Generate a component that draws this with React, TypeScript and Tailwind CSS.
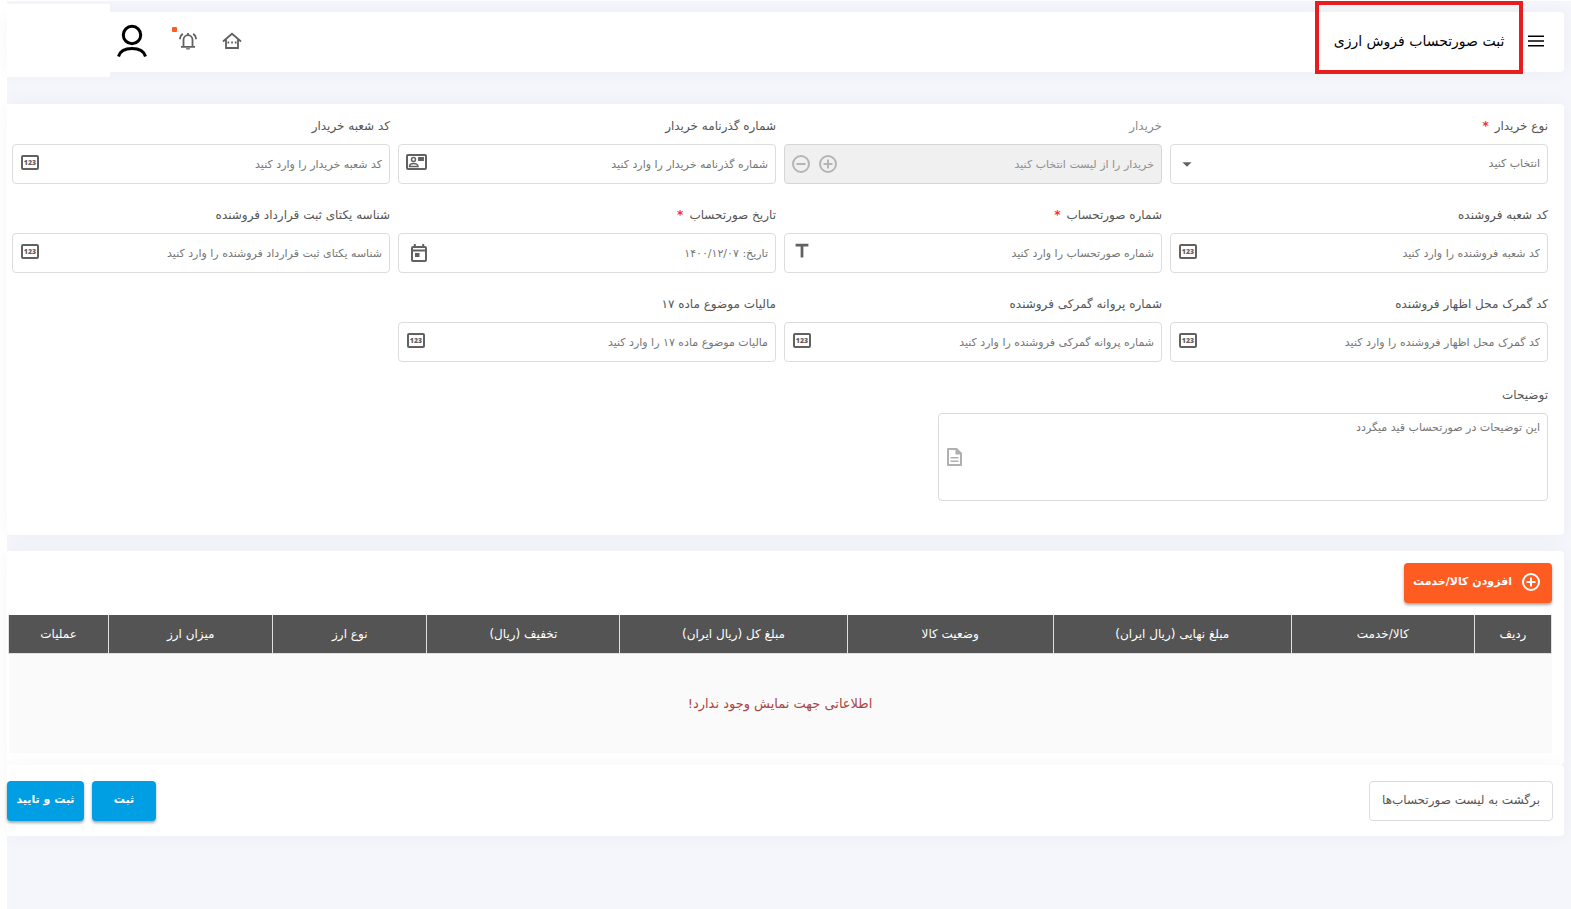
import type { ReactNode } from 'react';
import { MdArrowDropDown, MdTitle } from 'react-icons/md';

type IconName = 'number' | 'contact' | 'date' | 'text' | 'select' | 'picker';

interface Field {
  id: string;
  label: string;
  placeholder: string;
  icon: IconName;
  required?: boolean;
  disabled?: boolean;
}

const fields: Field[] = [
  { id: 'buyerType', label: 'نوع خریدار', placeholder: 'انتخاب کنید', icon: 'select', required: true },
  { id: 'buyer', label: 'خریدار', placeholder: 'خریدار را از لیست انتخاب کنید', icon: 'picker', disabled: true },
  { id: 'passport', label: 'شماره گذرنامه خریدار', placeholder: 'شماره گذرنامه خریدار را وارد کنید', icon: 'contact' },
  { id: 'buyerBranch', label: 'کد شعبه خریدار', placeholder: 'کد شعبه خریدار را وارد کنید', icon: 'number' },
  { id: 'sellerBranch', label: 'کد شعبه فروشنده', placeholder: 'کد شعبه فروشنده را وارد کنید', icon: 'number' },
  { id: 'invoiceNumber', label: 'شماره صورتحساب', placeholder: 'شماره صورتحساب را وارد کنید', icon: 'text', required: true },
  { id: 'invoiceDate', label: 'تاریخ صورتحساب', placeholder: 'تاریخ: ۱۴۰۰/۱۲/۰۷', icon: 'date', required: true },
  { id: 'contractId', label: 'شناسه یکتای ثبت قرارداد فروشنده', placeholder: 'شناسه یکتای ثبت قرارداد فروشنده را وارد کنید', icon: 'number' },
  { id: 'customsCode', label: 'کد گمرک محل اظهار فروشنده', placeholder: 'کد گمرک محل اظهار فروشنده را وارد کنید', icon: 'number' },
  { id: 'customsLicense', label: 'شماره پروانه گمرکی فروشنده', placeholder: 'شماره پروانه گمرکی فروشنده را وارد کنید', icon: 'number' },
  { id: 'taxArticle', label: 'مالیات موضوع ماده ۱۷', placeholder: 'مالیات موضوع ماده ۱۷ را وارد کنید', icon: 'number' },
];

const columns = [
  { title: 'ردیف', width: 'w-[77px]' },
  { title: 'کالا/خدمت', width: 'w-[183px]' },
  { title: 'مبلغ نهایی (ریال ایران)', width: 'w-[238px]' },
  { title: 'وضعیت کالا', width: 'w-[206px]' },
  { title: 'مبلغ کل (ریال ایران)', width: 'w-[227px]' },
  { title: 'تخفیف (ریال)', width: 'w-[193px]' },
  { title: 'نوع ارز', width: 'w-[154px]' },
  { title: 'میزان ارز', width: 'w-[164px]' },
  { title: 'عملیات', width: 'w-[100px]' },
];

const controlClass =
  'h-10 w-full rounded border border-[#dcdcdc] bg-white pr-[7px] pl-10 text-[11px] text-[#757575] placeholder:text-[#757575] outline-none disabled:border-[#d6d6d6] disabled:bg-[#f0f0f0] disabled:placeholder:text-[#8f8f8f]';

function NumberIcon() {
  return (
    <svg width="18" height="15" viewBox="0 0 18 15" className="text-[#616161]">
      <rect x="1" y="1" width="16" height="13" rx="1" fill="none" stroke="currentColor" strokeWidth="2" />
      <text
        x="9"
        y="10"
        textAnchor="middle"
        fontSize="7"
        fontWeight="800"
        fill="currentColor"
        direction="ltr"
        fontFamily="Open Sans, sans-serif"
      >
        123
      </text>
    </svg>
  );
}

function ContactIcon() {
  return (
    <svg width="21" height="16" viewBox="0 0 21 16" fill="none" stroke="currentColor">
      <rect x="1" y="1" width="19" height="14" rx="1" strokeWidth="2" />
      <circle cx="7.500" cy="5.500" r="2" strokeWidth="1.500" />
      <path d="M3.500 12.500c0-2 2-3 4-3s4.500 1 4.500 3z" strokeWidth="1.500" />
      <path d="M12.700 3.700h4.600v2.600h-4.600zM12.700 5h4.600" strokeWidth="1.300" />
    </svg>
  );
}

function CalendarIcon() {
  return (
    <svg width="16" height="18" viewBox="0 0 16 18" fill="none" stroke="currentColor" strokeWidth="2">
      <rect x="1" y="3" width="14" height="14" rx="1" />
      <path d="M1 6.500h14" />
      <path d="M3.800 0v3M12.200 0v3" />
      <path d="M4 9h4.500v4H4z" fill="currentColor" stroke="none" />
    </svg>
  );
}

function DocumentIcon() {
  return (
    <svg
      width="15"
      height="18"
      viewBox="0 0 15 18"
      fill="none"
      stroke="currentColor"
      className="absolute top-[35px] left-[9px] text-[#b0b0b0]"
    >
      <path d="M1 1h8.500L14 5.500V17H1z" strokeWidth="2" strokeLinejoin="round" />
      <path d="M8.500 1v5.500H14L9 1z" fill="currentColor" stroke="none" />
      <path d="M3.500 9.700h8M3.500 13.300h8" strokeWidth="1.600" />
    </svg>
  );
}

function CircleIcon({ plus = false }: { plus?: boolean }) {
  return (
    <svg width="18" height="18" viewBox="0 0 18 18" fill="none" stroke="currentColor" strokeWidth="2">
      <circle cx="9" cy="9" r="8" />
      <path d={plus ? 'M4.500 9h9M9 4.500v9' : 'M4.500 9h9'} />
    </svg>
  );
}

function MenuIcon() {
  return (
    <svg width="16" height="12" viewBox="0 0 16 12" stroke="currentColor" strokeWidth="1.600">
      <path d="M0 1.300h16M0 6h16M0 10.700h16" />
    </svg>
  );
}

function HomeIcon() {
  return (
    <svg width="20" height="18" viewBox="0 0 20 18" fill="none" stroke="currentColor" strokeWidth="1.800">
      <path d="M1 9.500 10 1.800l9 7.700M4 7.500V16h12V7.500" />
      <path d="M5.500 10.500h1.700M9.200 10.500h1.700M12.800 10.500h1.700" />
    </svg>
  );
}

function BellIcon() {
  return (
    <svg width="20" height="20" viewBox="0 0 20 20" fill="none" stroke="currentColor" strokeWidth="1.800">
      <path d="M5.500 15.500V9a4.500 4.800 0 0 1 9 0v6.500M3 15.800h14M10 4.200V2" />
      <path d="M2 8.200C2.100 5.700 3 4 4.800 2.700M18 8.200c-.1-2.500-1-4.200-2.800-5.500" />
      <path d="M8.400 17.400h3.200v.8H8.400z" fill="currentColor" strokeWidth="0.500" />
    </svg>
  );
}

function UserIcon() {
  return (
    <svg width="32" height="34" viewBox="0 0 32 34" fill="none" stroke="currentColor" strokeWidth="3">
      <circle cx="16" cy="11" r="8.700" />
      <path d="M2.500 32.500C4 27 9.500 24.500 16 24.500s12 2.500 13.500 8" />
    </svg>
  );
}

const fieldIcons: Record<IconName, { place: string; node: ReactNode }> = {
  number: { place: 'left-[9px] pb-1', node: <NumberIcon /> },
  contact: { place: 'left-[8px] pb-1', node: <ContactIcon /> },
  date: { place: 'left-[13px]', node: <CalendarIcon /> },
  text: { place: 'left-[7px] pb-1', node: <MdTitle size={22} /> },
  select: { place: 'left-[6px]', node: <MdArrowDropDown size={22} /> },
  picker: {
    place: 'left-2 gap-[9px] text-[#b5b5b5]',
    node: (
      <>
        <CircleIcon plus />
        <CircleIcon />
      </>
    ),
  },
};

function FormField({ field }: { field: Field }) {
  const icon = fieldIcons[field.icon];

  return (
    <div>
      <label
        htmlFor={field.id}
        className={`mb-1 flex h-7 items-center gap-1.5 text-xs ${field.disabled ? 'text-[#8a8a8a]' : 'text-[#545454]'}`}
      >
        {field.label}
        {field.required && <span className="font-bold text-red-500">*</span>}
      </label>
      <div className="relative">
        {field.icon === 'select' ? (
          <select id={field.id} className={`${controlClass} appearance-none`}>
            <option>{field.placeholder}</option>
          </select>
        ) : (
          <input
            id={field.id}
            type="text"
            placeholder={field.placeholder}
            disabled={field.disabled}
            className={controlClass}
          />
        )}
        <span className={`pointer-events-none absolute inset-y-0 flex items-center text-[#616161] ${icon.place}`}>
          {icon.node}
        </span>
      </div>
    </div>
  );
}

export default function App() {
  return (
    <div dir="rtl" className="bg-white pt-px pl-[7px] font-['DejaVu_Sans',sans-serif]">
      <div className="min-h-[calc(100vh-1px)] bg-[#f5f6fb] pt-[11px] pr-[7px]">
        {/* Top bar */}
        <header className="flex h-15 items-center rounded-r bg-white pr-5 shadow-[0_0_20px_rgba(0,0,0,0.04)]">
          <button type="button" aria-label="منو" className="pb-0.5 text-black">
            <MenuIcon />
          </button>
          <h1 className="-mt-[11px] -mb-0.5 mr-[5px] flex h-[73px] w-[208px] items-center justify-center self-start border-4 border-[#e81d1f] pt-1.5 text-sm font-medium text-black">
            ثبت صورتحساب فروش ارزی
          </h1>
          <div className="mr-auto flex items-center pb-0.5 text-[#616161]">
            <button type="button" aria-label="خانه">
              <HomeIcon />
            </button>
            <button type="button" aria-label="اعلان‌ها" className="relative mr-6">
              <BellIcon />
              <span className="absolute -top-1 -left-1.5 size-[5px] rounded-[1px] bg-[#ff5c21]" />
            </button>
            <button type="button" aria-label="حساب کاربری" className="mr-[30px] text-black">
              <UserIcon />
            </button>
          </div>
          <div className="mr-1.5 -mt-2 -mb-[5px] w-[103px] self-stretch bg-white" />
        </header>

        {/* Invoice form */}
        <form className="mt-8 rounded-r bg-white pt-2 pr-4 pb-[34px] pl-[5px] shadow-[0_0_20px_rgba(0,0,0,0.04)]">
          <div className="grid grid-cols-4 gap-x-2 gap-y-[17px]">
            {fields.map((field) => (
              <FormField key={field.id} field={field} />
            ))}
          </div>
          <div className="mt-[19px] w-[610px] max-w-full">
            <label htmlFor="description" className="mb-1 flex h-7 items-center text-xs text-[#545454]">
              توضیحات
            </label>
            <div className="relative">
              <textarea
                id="description"
                placeholder="این توضیحات در صورتحساب قید میگردد"
                className="block h-[88px] w-full resize-none rounded border border-[#dcdcdc] pt-1.5 pr-[7px] pl-10 text-[11px] outline-none placeholder:text-[#757575]"
              />
              <DocumentIcon />
            </div>
          </div>
        </form>

        {/* Goods and services */}
        <section className="mt-4 rounded-r bg-white pt-3 pr-3 pb-3 pl-px shadow-[0_0_20px_rgba(0,0,0,0.04)]">
          <button
            type="button"
            className="flex h-10 w-[148px] items-center gap-2.5 rounded bg-[#ff5c21] pr-3 pb-0.5 text-[11px] font-bold whitespace-nowrap text-white shadow-[0_2px_3px_rgba(0,0,0,0.35)]"
          >
            <CircleIcon plus />
            افزودن کالا/خدمت
          </button>
          <table className="mt-3 w-full table-fixed border-collapse">
            <thead>
              <tr className="h-[38px] bg-[#545454]">
                {columns.map((column) => (
                  <th
                    key={column.title}
                    className={`${column.width} border-x border-b border-[#e0e0e0] text-xs font-normal text-white`}
                  >
                    {column.title}
                  </th>
                ))}
              </tr>
            </thead>
            <tbody>
              <tr className="h-[100px] bg-[#fafafa]">
                <td colSpan={columns.length} className="text-center text-[13px] text-[#a94442]">
                  اطلاعاتی جهت نمایش وجود ندارد!
                </td>
              </tr>
            </tbody>
          </table>
        </section>

        {/* Actions */}
        <footer className="flex h-[71px] items-center rounded-r bg-white pr-[11px] shadow-[0_0_20px_rgba(0,0,0,0.04)]">
          <button
            type="button"
            className="h-10 w-[184px] rounded border border-[#dcdcdc] pb-0.5 text-xs whitespace-nowrap text-[#545454]"
          >
            برگشت به لیست صورتحساب‌ها
          </button>
          <div className="mr-auto flex gap-2 text-[11px] font-bold text-white">
            <button type="button" className="h-10 w-16 rounded bg-[#009fe3] shadow-[0_2px_3px_rgba(0,0,0,0.35)]">
              ثبت
            </button>
            <button type="button" className="h-10 w-[77px] rounded bg-[#009fe3] shadow-[0_2px_3px_rgba(0,0,0,0.35)]">
              ثبت و تایید
            </button>
          </div>
        </footer>
      </div>
    </div>
  );
}
